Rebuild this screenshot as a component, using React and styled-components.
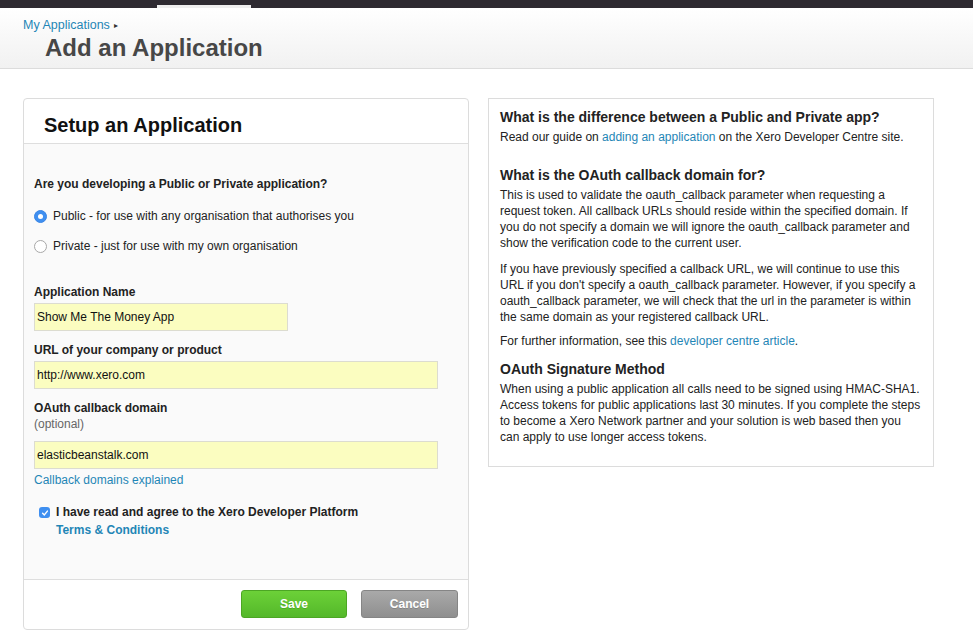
import React from 'react';
import styled, { createGlobalStyle } from 'styled-components';

const Global = createGlobalStyle`
  html, body { margin: 0; padding: 0; background: #fff; }
  body { font-family: "Liberation Sans", Arial, sans-serif; color: #222; }
  * { box-sizing: border-box; }
`;

const TopBar = styled.div`
  height: 8px;
  background: #2e2a31;
  position: relative;
`;

const ActiveTab = styled.span`
  position: absolute;
  left: 157px;
  bottom: 0;
  width: 94px;
  height: 3px;
  background: #eeeeee;
`;

const PageHeader = styled.header`
  height: 61px;
  background: linear-gradient(180deg, #ffffff 0%, #f1f1f1 100%);
  border-bottom: 1px solid #dcdcdc;
  padding: 10px 0 0 23px;
`;

const Crumb = styled.a`
  font-size: 12.5px;
  color: #1f86b6;
  text-decoration: none;
  line-height: 15px;
  display: block;
  span { color: #333; font-size: 8px; margin-left: 4px; vertical-align: 1px; }
`;

const PageTitle = styled.h1`
  margin: 0 0 0 22px;
  font-size: 24px;
  line-height: 30px;
  font-weight: bold;
  color: #474747;
`;

const Main = styled.div`
  display: flex;
  align-items: flex-start;
  gap: 19px;
  padding: 29px 0 0 23px;
`;

const Panel = styled.section`
  width: ${(p) => p.$width}px;
  border: 1px solid #dcdcdc;
  border-radius: ${(p) => (p.$rounded ? '4px' : '0')};
  background: #fff;
  overflow: hidden;
`;

const PanelHead = styled.div`
  height: 45px;
  border-bottom: 1px solid #dedede;
  padding: 8px 0 0 20px;
  display: flex;
  align-items: center;
`;

const PanelTitle = styled.h2`
  margin: 0;
  font-size: 20px;
  font-weight: bold;
  color: #111;
`;

const FormBody = styled.div`
  background: #fafafa;
  padding: 32px 10px 40px 10px;
  border-bottom: 1px solid #dedede;
  font-size: 12px;
`;

const Question = styled.div`
  font-weight: bold;
  color: #222;
  line-height: 16px;
  margin-bottom: 16px;
`;

const RadioRow = styled.label`
  display: flex;
  align-items: center;
  gap: 6px;
  color: #222;
  height: 16px;
  margin-bottom: 14px;
`;

const RadioDot = styled.span`
  width: 13px;
  height: 13px;
  border-radius: 50%;
  flex: none;
  background: ${(p) => (p.$on ? '#3f8ff0' : '#fff')};
  border: 1px solid ${(p) => (p.$on ? '#3a86e6' : '#a8a8a8')};
  display: flex;
  align-items: center;
  justify-content: center;
  &::after {
    content: '';
    width: 5px;
    height: 5px;
    border-radius: 50%;
    background: #fff;
    display: ${(p) => (p.$on ? 'block' : 'none')};
  }
`;

const Field = styled.div`
  margin-top: ${(p) => p.$top || 0}px;
`;

const Label = styled.div`
  font-weight: bold;
  color: #222;
  line-height: 16px;
`;

const Hint = styled.div`
  color: #666;
  line-height: 16px;
`;

const Input = styled.div`
  width: ${(p) => p.$width}px;
  height: 28px;
  margin-top: ${(p) => p.$gap || 3}px;
  background: #fbfdc0;
  border: 1px solid #dcdcd0;
  color: #111;
  padding: 0 2px;
  display: flex;
  align-items: center;
`;

const Link = styled.a`
  color: #1f86b6;
  text-decoration: none;
  font-weight: ${(p) => (p.$bold ? 'bold' : 'normal')};
`;

const HelpLink = styled(Link)`
  display: block;
  margin-top: 3px;
  line-height: 16px;
`;

const Agree = styled.div`
  display: flex;
  gap: 6px;
  margin: 15px 0 0 5px;
  line-height: 18px;
  font-weight: bold;
  color: #222;
`;

const CheckBox = styled.span`
  width: 11px;
  height: 11px;
  margin-top: 4px;
  border-radius: 3px;
  background: #3f8ff0;
  flex: none;
  display: flex;
  align-items: center;
  justify-content: center;
`;

const Footer = styled.div`
  display: flex;
  justify-content: flex-end;
  gap: 14px;
  padding: 10px 10px 11px;
`;

const Button = styled.button`
  width: ${(p) => p.$width}px;
  height: 28px;
  border-radius: 3px;
  font-family: "Liberation Sans", Arial, sans-serif;
  font-size: 12px;
  font-weight: bold;
  color: #fff;
  text-shadow: 0 1px 0 rgba(0, 0, 0, 0.15);
  cursor: pointer;
  background: ${(p) =>
    p.$variant === 'save'
      ? 'linear-gradient(180deg, #6cd138 0%, #54b82a 100%)'
      : 'linear-gradient(180deg, #a9a9a9 0%, #8f8f8f 100%)'};
  border: 1px solid ${(p) => (p.$variant === 'save' ? '#4ca624' : '#858585')};
`;

const Info = styled.div`
  padding: 9px 11px 21px;
  font-size: 12px;
  line-height: 16px;
  color: #222;
`;

const InfoTitle = styled.h3`
  margin: ${(p) => p.$top || 0}px 0 3px;
  font-size: 14px;
  line-height: 18px;
  font-weight: bold;
  color: #222;
`;

const Para = styled.p`
  margin: 0 0 ${(p) => p.$after ?? 8}px;
`;

export default function App() {
  return (
    <>
      <Global />
      <TopBar>
        <ActiveTab />
      </TopBar>
      <PageHeader>
        <Crumb href="#">My Applications<span>▸</span></Crumb>
        <PageTitle>Add an Application</PageTitle>
      </PageHeader>

      <Main>
        <Panel $width={446} $rounded>
          <PanelHead>
            <PanelTitle>Setup an Application</PanelTitle>
          </PanelHead>
          <FormBody>
            <Question>Are you developing a Public or Private application?</Question>
            <RadioRow>
              <RadioDot $on />
              Public - for use with any organisation that authorises you
            </RadioRow>
            <RadioRow>
              <RadioDot />
              Private - just for use with my own organisation
            </RadioRow>

            <Field $top={30}>
              <Label>Application Name</Label>
              <Input $width={254}>Show Me The Money App</Input>
            </Field>
            <Field $top={11}>
              <Label>URL of your company or product</Label>
              <Input $width={404}>http://www.xero.com</Input>
            </Field>
            <Field $top={11}>
              <Label>OAuth callback domain</Label>
              <Hint>(optional)</Hint>
              <Input $width={404} $gap={9}>elasticbeanstalk.com</Input>
              <HelpLink href="#">Callback domains explained</HelpLink>
            </Field>

            <Agree>
              <CheckBox>
                <svg width="8" height="8" viewBox="0 0 10 10">
                  <path d="M2 5.3 L4.2 7.4 L8 2.6" stroke="#fff" strokeWidth="1.8" fill="none" strokeLinecap="round" strokeLinejoin="round" />
                </svg>
              </CheckBox>
              <div>
                I have read and agree to the Xero Developer Platform
                <br />
                <Link href="#" $bold>Terms &amp; Conditions</Link>
              </div>
            </Agree>
          </FormBody>
          <Footer>
            <Button $variant="save" $width={106}>Save</Button>
            <Button $width={97}>Cancel</Button>
          </Footer>
        </Panel>

        <Panel $width={446}>
          <Info>
            <InfoTitle>What is the difference between a Public and Private app?</InfoTitle>
            <Para $after={0}>
              Read our guide on <Link href="#">adding an application</Link> on the Xero Developer Centre site.
            </Para>

            <InfoTitle $top={21}>What is the OAuth callback domain for?</InfoTitle>
            <Para $after={10}>
              This is used to validate the oauth_callback parameter when requesting a request token. All callback URLs should reside within the specified domain. If you do not specify a domain we will ignore the oauth_callback parameter and show the verification code to the current user.
            </Para>
            <Para $after={8}>
              If you have previously specified a callback URL, we will continue to use this URL if you don't specify a oauth_callback parameter. However, if you specify a oauth_callback parameter, we will check that the url in the parameter is within the same domain as your registered callback URL.
            </Para>
            <Para $after={11}>
              For further information, see this <Link href="#">developer centre article</Link>.
            </Para>

            <InfoTitle>OAuth Signature Method</InfoTitle>
            <Para $after={0}>
              When using a public application all calls need to be signed using HMAC-SHA1. Access tokens for public applications last 30 minutes. If you complete the steps to become a Xero Network partner and your solution is web based then you can apply to use longer access tokens.
            </Para>
          </Info>
        </Panel>
      </Main>
    </>
  );
}
